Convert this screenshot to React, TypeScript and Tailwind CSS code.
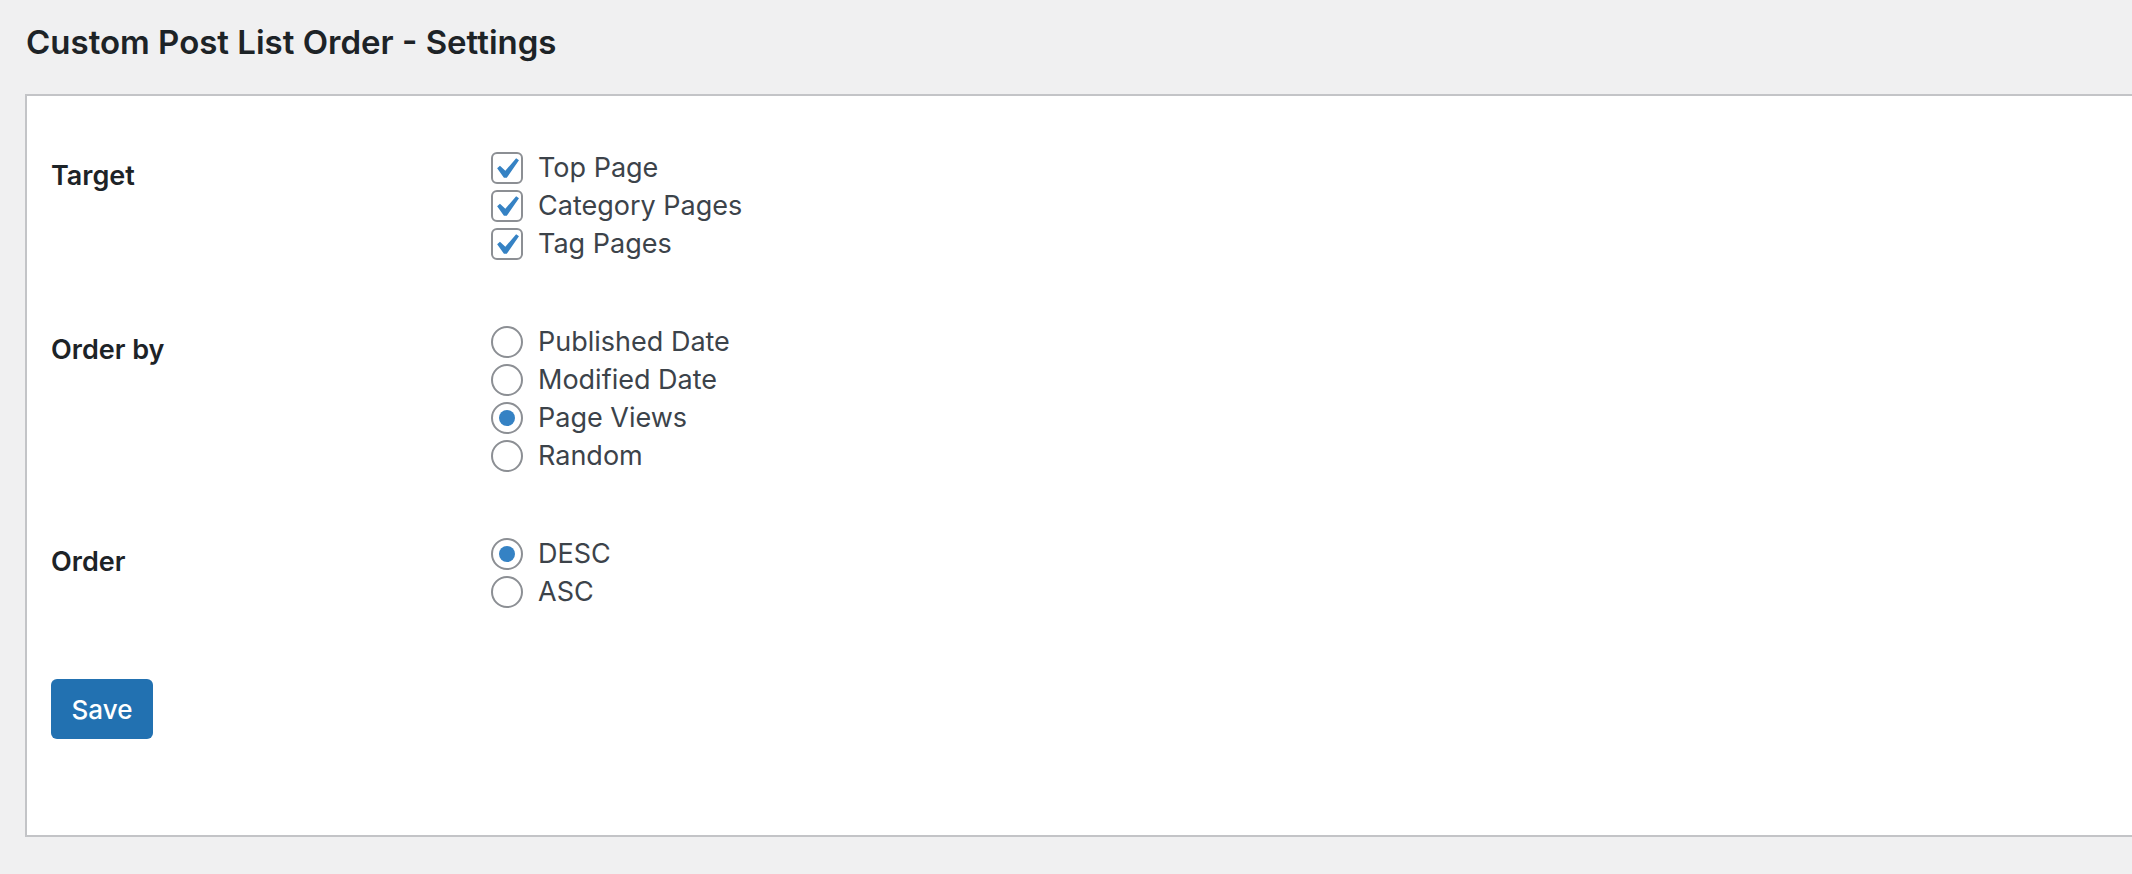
import React from "react"

const checkPath = "M14.83 4.89l1.34.94-5.81 8.38H9.02L5.78 9.67l1.34-1.25 2.57 2.4z"

function Checkbox({ label }: { label: string }) {
  return (
    <label className="flex items-center h-[38px] gap-[15px]">
      <span className="relative w-[32px] h-[32px] rounded-[6px] border-2 border-[#8c8f94] bg-white shrink-0">
        <svg viewBox="0 0 20 20" className="absolute left-[-8px] top-[-6px] w-[42px] h-[42px]">
          <path d={checkPath} fill="#3582c4" />
        </svg>
      </span>
      <span>{label}</span>
    </label>
  )
}

function Radio({ label, checked }: { label: string; checked?: boolean }) {
  return (
    <label className="flex items-center h-[38px] gap-[15px]">
      <span className="flex items-center justify-center w-[32px] h-[32px] rounded-full border-2 border-[#8c8f94] bg-white shrink-0">
        {checked && <span className="w-[16px] h-[16px] rounded-full bg-[#3582c4]" />}
      </span>
      <span>{label}</span>
    </label>
  )
}

function Row({ title, children }: { title: string; children: React.ReactNode }) {
  return (
    <div className="flex">
      <div className="w-[440px] shrink-0 pt-[8px] leading-[38px] font-semibold text-[#1d2327]">{title}</div>
      <div className="flex flex-col">{children}</div>
    </div>
  )
}

export default function App() {
  return (
    <div className="min-h-[874px] bg-[#f0f0f1] pl-[25px] pt-[20px] font-['Inter',sans-serif]">
      <h2 className="text-[33px] leading-[44px] font-semibold text-[#1d2327] pl-[1px]">
        Custom Post List Order - Settings
      </h2>

      <div className="mt-[30px] bg-white border-2 border-r-0 border-[#c3c4c7] pl-[24px] pt-[53px] pb-[96px] text-[27px] text-[#3c434a]">
        <div className="flex flex-col gap-[60px]">
          <Row title="Target">
            <Checkbox label="Top Page" />
            <Checkbox label="Category Pages" />
            <Checkbox label="Tag Pages" />
          </Row>
          <Row title="Order by">
            <Radio label="Published Date" />
            <Radio label="Modified Date" />
            <Radio label="Page Views" checked />
            <Radio label="Random" />
          </Row>
          <Row title="Order">
            <Radio label="DESC" checked />
            <Radio label="ASC" />
          </Row>
        </div>

        <button className="mt-[68px] h-[60px] w-[102px] rounded-[6px] bg-[#2271b1] text-white text-[26px] font-medium">
          Save
        </button>
      </div>
    </div>
  )
}
